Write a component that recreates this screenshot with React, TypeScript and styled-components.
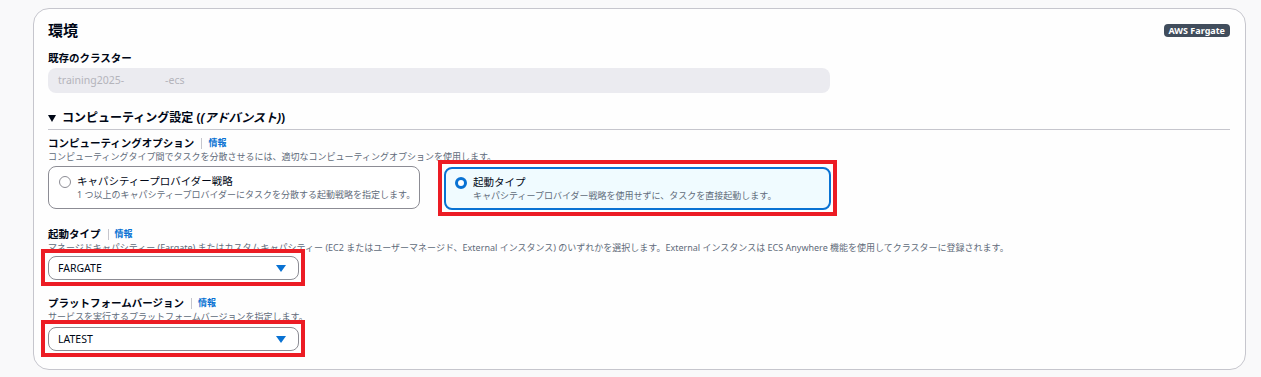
import React from 'react';
import styled, { createGlobalStyle, css } from 'styled-components';

const GlobalStyle = createGlobalStyle`
  html, body {
    margin: 0;
    padding: 0;
    background: #f9f9fa;
    font-family: "Noto Sans", "Noto Sans CJK JP", sans-serif;
    color: #000716;
  }
`;

// red annotation frame drawn over a control (square, not following its radius)
const highlight = (inset: string) => css`
  position: relative;
  &::after {
    content: '';
    position: absolute;
    inset: ${inset};
    border: 4px solid #ec1c24;
    pointer-events: none;
  }
`;

const Page = styled.div`
  padding: 8px 15px 8px 33px;
`;

const Card = styled.section`
  box-sizing: border-box;
  width: 1213px;
  background: #fefefe;
  border: 1px solid #c6c6cd;
  border-radius: 16px;
  padding: 8px 15px 18px 14px;
`;

const Header = styled.div`
  display: flex;
  align-items: center;
  justify-content: space-between;
  height: 26px;
`;

const Title = styled.h2`
  margin: 0;
  font-size: 15px;
  font-weight: 700;
  line-height: 26px;
`;

const Badge = styled.span`
  background: #414d5c;
  color: #ffffff;
  font-size: 9px;
  font-weight: 700;
  line-height: 13px;
  padding: 0 5px;
  border-radius: 4px;
`;

const Label = styled.div<{ $top: number }>`
  display: flex;
  align-items: center;
  margin-top: ${(p) => p.$top}px;
  font-size: 10.5px;
  font-weight: 700;
  line-height: 14px;
`;

const Separator = styled.span`
  width: 1px;
  height: 11px;
  background: #c6c6cd;
  margin: 0 6px 0 7px;
`;

const InfoLink = styled.a`
  color: #0972d3;
  font-size: 9px;
  font-weight: 700;
  text-decoration: none;
`;

const Description = styled.div`
  font-size: 9px;
  line-height: 13px;
  color: #5f6b7a;
  white-space: nowrap;
`;

const ReadOnlyField = styled.div`
  box-sizing: border-box;
  margin-top: 3px;
  width: 782px;
  height: 25px;
  background: #ebebf0;
  border-radius: 8px;
  padding: 0 10px;
  font-size: 10.5px;
  line-height: 25px;
  color: #b4b4bb;
  white-space: nowrap;
`;

const Redacted = styled.span`
  display: inline-block;
  width: 41px;
`;

const SectionHeader = styled.div`
  margin-top: 14px;
  display: flex;
  align-items: center;
  gap: 6px;
  height: 22px;
  border-bottom: 1px solid #c6c6cd;
  width: 1182px;
  font-size: 12px;
  font-weight: 700;
  line-height: 22px;
`;

const Caret = styled.span`
  width: 0;
  height: 0;
  border-left: 4px solid transparent;
  border-right: 4px solid transparent;
  border-top: 7px solid #000716;
`;

const Tiles = styled.div`
  display: grid;
  grid-template-columns: 372px 387px;
  gap: 24px;
  margin-top: 3px;
`;

const Tile = styled.label<{ $selected?: boolean; $marked?: boolean }>`
  box-sizing: border-box;
  height: 43px;
  border-radius: 8px;
  padding: 6px 6px 0 10px;
  display: grid;
  grid-template-columns: 12px 1fr;
  column-gap: 6px;
  border: ${(p) => (p.$selected ? '2px solid #0972d3' : '1px solid #8c8c94')};
  background: ${(p) => (p.$selected ? '#f0fbff' : '#ffffff')};
  ${(p) => (p.$selected ? 'padding: 5px 5px 0 9px; margin-top: 1px;' : '')}
  ${(p) => p.$marked && highlight('-9px -8px -8px -8px')}
`;

const Radio = styled.span<{ $checked?: boolean }>`
  box-sizing: border-box;
  width: 12px;
  height: 12px;
  margin-top: 3px;
  border-radius: 50%;
  background: #ffffff;
  border: ${(p) => (p.$checked ? '3.5px solid #0972d3' : '1.5px solid #8c8c94')};
`;

const TileTitle = styled.div`
  font-size: 10.5px;
  line-height: 16px;
`;

const TileText = styled.div`
  font-size: 9px;
  line-height: 12px;
  color: #5f6b7a;
  white-space: nowrap;
`;

const Select = styled.div<{ $marked?: boolean; $top: number }>`
  box-sizing: border-box;
  margin-top: ${(p) => p.$top}px;
  width: 251px;
  height: 24px;
  border: 1px solid #8c8c94;
  border-radius: 8px;
  background: #ffffff;
  padding: 0 12px 0 9px;
  display: flex;
  align-items: center;
  justify-content: space-between;
  font-size: 10.5px;
  ${(p) => p.$marked && highlight('-8px -7px -7px -8px')}
`;

const Arrow = styled.span`
  width: 0;
  height: 0;
  border-left: 5px solid transparent;
  border-right: 5px solid transparent;
  border-top: 7px solid #0972d3;
`;

const Info = () => (
  <>
    <Separator />
    <InfoLink href="#">情報</InfoLink>
  </>
);

export default function App() {
  return (
    <Page>
      <GlobalStyle />
      <Card>
        <Header>
          <Title>環境</Title>
          <Badge>AWS Fargate</Badge>
        </Header>

        <Label $top={8}>既存のクラスター</Label>
        <ReadOnlyField>
          training2025-<Redacted />-ecs
        </ReadOnlyField>

        <SectionHeader>
          <Caret />
          <span>
            コンピューティング設定 (<i>(アドバンスト)</i>)
          </span>
        </SectionHeader>

        <Label $top={6}>
          コンピューティングオプション
          <Info />
        </Label>
        <Description>
          コンピューティングタイプ間でタスクを分散させるには、適切なコンピューティングオプションを使用します。
        </Description>
        <Tiles>
          <Tile>
            <Radio />
            <div>
              <TileTitle>キャパシティープロバイダー戦略</TileTitle>
              <TileText>1 つ以上のキャパシティープロバイダーにタスクを分散する起動戦略を指定します。</TileText>
            </div>
          </Tile>
          <Tile $selected $marked>
            <Radio $checked />
            <div>
              <TileTitle>起動タイプ</TileTitle>
              <TileText>キャパシティープロバイダー戦略を使用せずに、タスクを直接起動します。</TileText>
            </div>
          </Tile>
        </Tiles>

        <Label $top={17}>
          起動タイプ
          <Info />
        </Label>
        <Description>
          マネージドキャパシティー (Fargate) またはカスタムキャパシティー (EC2 またはユーザーマネージド、External インスタンス) のいずれかを選択します。External インスタンスは ECS Anywhere 機能を使用してクラスターに登録されます。
        </Description>
        <Select $marked $top={2}>
          FARGATE
          <Arrow />
        </Select>

        <Label $top={16}>
          プラットフォームバージョン
          <Info />
        </Label>
        <Description>サービスを実行するプラットフォームバージョンを指定します。</Description>
        <Select $marked $top={4}>
          LATEST
          <Arrow />
        </Select>
      </Card>
    </Page>
  );
}
